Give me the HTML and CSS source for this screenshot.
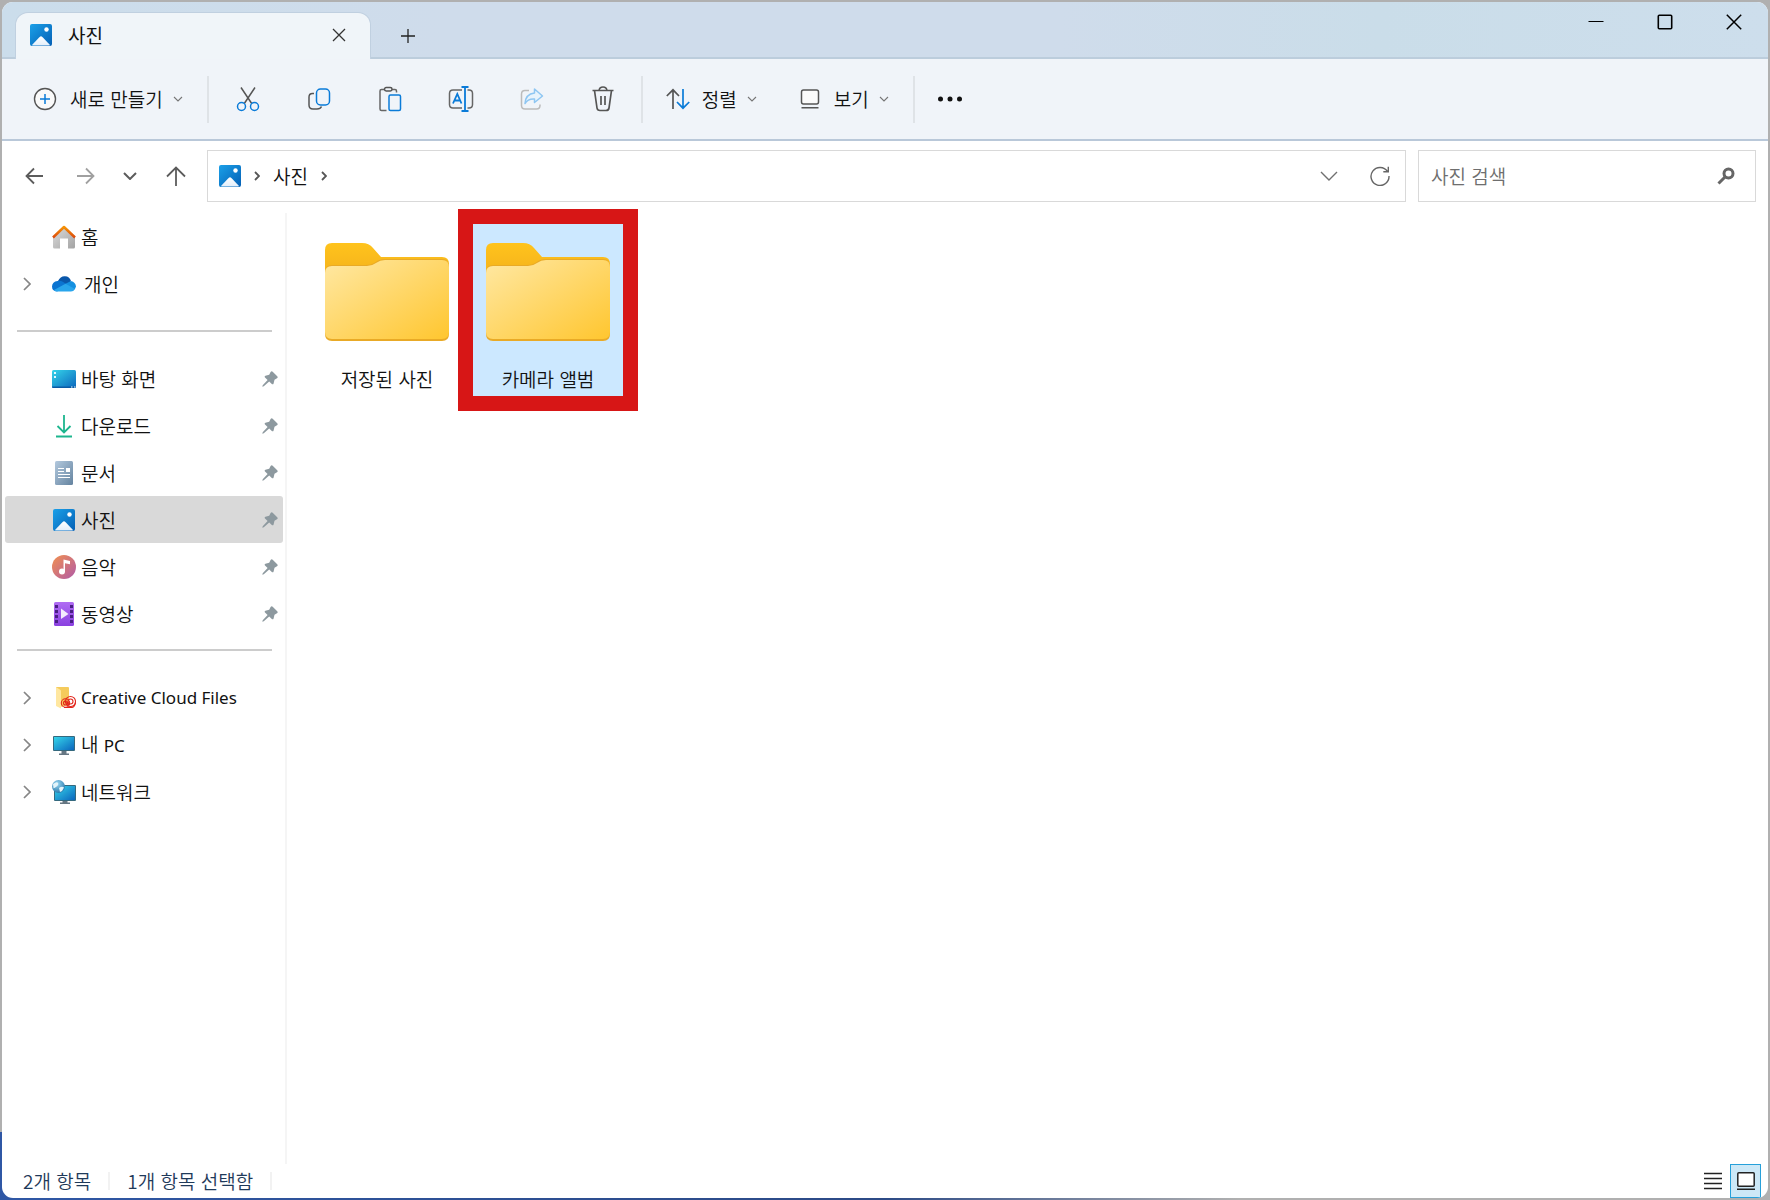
FILE: index.html
```html
<!DOCTYPE html>
<html lang="ko">
<head>
<meta charset="utf-8">
<title>사진</title>
<link rel="stylesheet" href="styles.css">
</head>
<body>
<svg class="defs" width="0" height="0" aria-hidden="true">
  <defs>
    <linearGradient id="blue" x1="0" y1="0" x2="1" y2="1"><stop offset="0" stop-color="#1ba0e8"/><stop offset="1" stop-color="#0560b5"/></linearGradient>
    <linearGradient id="snow" x1="0" y1="0" x2="0" y2="1"><stop offset="0" stop-color="#fff"/><stop offset="1" stop-color="#e3effb"/></linearGradient>
    <linearGradient id="screen" x1="0" y1="0" x2="1" y2="1"><stop offset="0" stop-color="#35d5ea"/><stop offset="1" stop-color="#0b66bd"/></linearGradient>
    <linearGradient id="roof" x1="0" y1="0" x2="0" y2="1"><stop offset="0" stop-color="#f59307"/><stop offset="1" stop-color="#dc4a0c"/></linearGradient>
    <linearGradient id="wall" x1="0" y1="0" x2="1" y2="1"><stop offset="0" stop-color="#ddd"/><stop offset="1" stop-color="#a3a3a3"/></linearGradient>
    <linearGradient id="paper" x1="0" y1="0" x2="1" y2="1"><stop offset="0" stop-color="#b3c9de"/><stop offset="1" stop-color="#64839f"/></linearGradient>
    <linearGradient id="music" x1="0" y1="0" x2="1" y2="1"><stop offset="0" stop-color="#f2904f"/><stop offset="1" stop-color="#b05aa8"/></linearGradient>
    <linearGradient id="film" x1="0" y1="0" x2="0" y2="1"><stop offset="0" stop-color="#b06cf3"/><stop offset="1" stop-color="#8a41e0"/></linearGradient>
    <linearGradient id="folder" x1="0" y1="0" x2="1" y2="1"><stop offset="0" stop-color="#ffe8a3"/><stop offset="1" stop-color="#ffc62f"/></linearGradient>
    <linearGradient id="flap" x1="0" y1="0" x2="0" y2="1"><stop offset="0" stop-color="#ffc31c"/><stop offset="1" stop-color="#eba41c"/></linearGradient>
    <radialGradient id="globe" cx=".4" cy=".3" r=".8"><stop offset="0" stop-color="#9bd8f2"/><stop offset="1" stop-color="#1c6fa5"/></radialGradient>
    <symbol id="i-picture" viewBox="0 0 22 22"><rect width="22" height="22" rx="2" fill="url(#blue)"/><path d="M2 21 9.600 13Q11 11.600 12.400 13L20 21Q19.500 21.500 19 21.500H3Q2.300 21.500 2 21Z" fill="url(#snow)"/><circle cx="16.500" cy="5.500" r="2.200" fill="#fff"/></symbol>
    <symbol id="i-folder" viewBox="0 0 124 98"><path d="M0 7Q0 0 7 0H37Q44 0 48 5L56 14H117Q124 14 124 21V60H0Z" fill="url(#flap)"/><path d="M0 30Q0 22 7 22H41Q46 22 50 19.500Q54 16 59 16H117Q124 16 124 24V91Q124 98 117 98H7Q0 98 0 91Z" fill="#e9aa26"/><path d="M0 30Q0 23 7 23H42Q47 23 51 20Q55 17 60 17H117Q124 17 124 24V89Q124 96 117 96H7Q0 96 0 89Z" fill="url(#folder)"/></symbol>
    <symbol id="i-pin" viewBox="0 0 16 16"><path d="M8.600 1Q9.600-.2 10.700.8L15.200 5.200Q16.300 6.300 15 7.200L12.500 8.700 11.600 12.500Q11 14 9.800 12.900L7.200 10.500 1.800 15.300.3 15.700.7 14.200 5.600 8.900 3 6.400Q2.100 5.300 3.400 4.700L7.200 3.700Z" fill="#8d999f"/></symbol>
    <symbol id="i-chev" viewBox="0 0 8 14"><path d="M1 1l6 6-6 6" fill="none" stroke="#868686" stroke-width="1.700"/></symbol>
    <symbol id="i-down" viewBox="0 0 10 6"><path d="M1 1l4 4 4-4" fill="none" stroke="#777" stroke-width="1.100"/></symbol>
  </defs>
</svg>

<div class="window">
  <header class="titlebar">
    <div class="tab">
      <svg width="22" height="22"><use href="#i-picture"/></svg>
      <span class="tab-title">사진</span>
      <button class="icon-btn tab-close" aria-label="탭 닫기"><svg width="14" height="14" viewBox="0 0 14 14"><path d="M1 1l12 12M13 1L1 13" stroke="#333" stroke-width="1.300"/></svg></button>
    </div>
    <button class="icon-btn new-tab" aria-label="새 탭"><svg width="16" height="16" viewBox="0 0 16 16"><path d="M8 1v14M1 8h14" stroke="#222" stroke-width="1.300"/></svg></button>
    <div class="win-buttons">
      <button class="icon-btn" aria-label="최소화"><svg width="16" height="16" viewBox="0 0 16 16"><path d="M.5 7.500h15" stroke="#000" stroke-width="1"/></svg></button>
      <button class="icon-btn" aria-label="최대화"><svg width="16" height="16" viewBox="0 0 16 16"><rect x="1.300" y="1.300" width="13.400" height="13.400" rx="1" fill="none" stroke="#000" stroke-width="1.600"/></svg></button>
      <button class="icon-btn" aria-label="닫기"><svg width="16" height="16" viewBox="0 0 16 16"><path d="M.8.8l14.400 14.400M15.200.8L.8 15.200" stroke="#000" stroke-width="1.500"/></svg></button>
    </div>
  </header>

  <div class="toolbar" role="toolbar">
    <button class="tool new-item"><svg width="24" height="24" viewBox="0 0 24 24" fill="none"><circle cx="12" cy="12" r="10.500" stroke="#555" stroke-width="1.400" fill="#fafafa"/><path d="M12 7v10M7 12h10" stroke="#0a7bd8" stroke-width="1.500"/></svg><span>새로 만들기</span><svg class="caret" width="10" height="6"><use href="#i-down"/></svg></button>
    <span class="sep"></span>
    <div class="icon-group">
      <button class="icon-btn" aria-label="잘라내기"><svg width="24" height="26" viewBox="0 0 24 26" fill="none" stroke-width="1.500"><path d="M5 1.500 15.700 17.500M19 1.500 8.300 17.500" stroke="#555"/><circle cx="5.500" cy="20.500" r="4" stroke="#0a7bd8"/><circle cx="18.500" cy="20.500" r="4" stroke="#0a7bd8"/></svg></button>
      <button class="icon-btn" aria-label="복사"><svg width="24" height="24" viewBox="0 0 24 24" fill="none" stroke-width="1.500"><path d="M7 6.500H5.500Q2 6.500 2 10V18Q2 22 6 22H10Q13.500 22 14.500 19.500" stroke="#555"/><rect x="9.500" y="2" width="13" height="16" rx="4" stroke="#0a7bd8"/></svg></button>
      <button class="icon-btn" aria-label="붙여넣기"><svg width="24" height="26" viewBox="0 0 24 26" fill="none" stroke-width="1.500"><path d="M6 3.500H3.500Q2 3.500 2 5V23Q2 24.500 3.500 24.500H8.500M14 3.500H17Q18.500 3.500 18.500 5V6.500" stroke="#666"/><rect x="6.500" y="1.500" width="7.500" height="3.500" rx="1.700" stroke="#555"/><rect x="11" y="9" width="11.500" height="15.500" rx="1.500" stroke="#0a7bd8"/></svg></button>
      <button class="icon-btn" aria-label="이름 바꾸기"><svg width="26" height="26" viewBox="0 0 26 26" fill="none" stroke-width="1.500"><path d="M14 4H5Q1.500 4 1.500 7.500V18.500Q1.500 22 5 22H14M19.500 4H21Q24.500 4 24.500 7.500V18.500Q24.500 22 21 22H19.500" stroke="#666"/><path d="M17 1v24M13.500 1H20.500M13.500 25H20.500" stroke="#0a7bd8" stroke-width="1.800"/><path d="M5 17.500 9.300 8 13.500 17.500M6.500 14.500H12" stroke="#0a7bd8" stroke-width="1.800"/></svg></button>
      <button class="icon-btn" aria-label="공유" disabled><svg width="24" height="24" viewBox="0 0 24 24" fill="none" stroke-width="1.500"><path d="M9 3.500H5Q1.500 3.500 1.500 7V18.500Q1.500 22 5 22H16.500Q20 22 20 18.500V17.500" stroke="#bbb"/><path d="M14.500 2 22.500 9 14.500 15.500V12Q8 11.500 5 16.500Q5.500 7 14.500 6Z" stroke="#8ec6f2" stroke-linejoin="round" fill="#e7f3fc"/></svg></button>
      <button class="icon-btn" aria-label="삭제"><svg width="24" height="26" viewBox="0 0 24 26" fill="none" stroke="#555" stroke-width="1.700"><path d="M1.500 4.500H22.500M8 4.500Q8.500 1 12 1T16 4.500M3.500 4.500 6 22Q6.400 24.500 9 24.500H15Q17.600 24.500 18 22L20.500 4.500"/><path d="M10 10v9M14 10v9"/></svg></button>
    </div>
    <span class="sep"></span>
    <button class="tool sort"><svg width="24" height="22" viewBox="0 0 24 22" fill="none" stroke-width="1.700"><path d="M7 21V2M.8 8 7 1.800 13 8" stroke="#555"/><path d="M17 1V20M11 14 17 20.200 23.200 14" stroke="#0a7bd8"/></svg><span>정렬</span><svg class="caret" width="10" height="6"><use href="#i-down"/></svg></button>
    <button class="tool view"><svg width="20" height="20" viewBox="0 0 20 20" fill="none" stroke="#555" stroke-width="1.500"><rect x="1.500" y="1" width="17" height="14" rx="2" fill="#fafafa"/><path d="M1.500 18.700h17"/></svg><span>보기</span><svg class="caret" width="10" height="6"><use href="#i-down"/></svg></button>
    <span class="sep"></span>
    <button class="icon-btn more" aria-label="자세히"><svg width="26" height="6" viewBox="0 0 26 6" fill="#111"><circle cx="3.500" cy="3" r="2.500"/><circle cx="13" cy="3" r="2.500"/><circle cx="22.500" cy="3" r="2.500"/></svg></button>
  </div>

  <div class="navbar">
    <div class="nav-buttons">
      <button class="icon-btn back" aria-label="뒤로"><svg width="18" height="18" viewBox="0 0 18 18" fill="none" stroke="#5c5c5c" stroke-width="1.800"><path d="M18 9H1.500M9 1.500 1.500 9 9 16.500"/></svg></button>
      <button class="icon-btn forward" aria-label="앞으로"><svg width="18" height="18" viewBox="0 0 18 18" fill="none" stroke="#a0a0a0" stroke-width="1.800"><path d="M0 9H16.500M9 1.500 16.500 9 9 16.500"/></svg></button>
      <button class="icon-btn recent" aria-label="최근 위치"><svg width="14" height="8" viewBox="0 0 14 8" fill="none" stroke="#5c5c5c" stroke-width="2"><path d="M1 1l6 6 6-6"/></svg></button>
      <button class="icon-btn up" aria-label="위로"><svg width="20" height="20" viewBox="0 0 20 20" fill="none" stroke="#5c5c5c" stroke-width="1.800"><path d="M10 20V1.500M1 10.500 10 1.500 19 10.500"/></svg></button>
    </div>
    <div class="address">
      <svg width="22" height="22"><use href="#i-picture"/></svg>
      <svg class="crumb-sep" width="6" height="10" viewBox="0 0 6 10"><path d="M1 1l4 4-4 4" fill="none" stroke="#555" stroke-width="1.800"/></svg>
      <a href="#" class="crumb">사진</a>
      <svg class="crumb-sep" width="6" height="10" viewBox="0 0 6 10"><path d="M1 1l4 4-4 4" fill="none" stroke="#555" stroke-width="1.800"/></svg>
      <div class="address-actions">
        <button class="icon-btn" aria-label="이전 위치"><svg width="18" height="10" viewBox="0 0 18 10" fill="none" stroke="#707070" stroke-width="1.400"><path d="M1 1l8 8 8-8"/></svg></button>
        <button class="icon-btn" aria-label="새로 고침"><svg width="20" height="20" viewBox="0 0 20 20" fill="none" stroke="#666" stroke-width="1.400"><path d="M17.500 5.500A9 9 0 1 0 19 10M18.300.8V5.800H13.300"/></svg></button>
      </div>
    </div>
    <label class="search">
      <input type="search" placeholder="사진 검색" aria-label="사진 검색">
      <svg width="18" height="18" viewBox="0 0 18 18" fill="none" stroke="#666"><circle cx="11.500" cy="6.500" r="4.500" stroke-width="3"/><path d="M8 10 1.500 16.500" stroke-width="3"/></svg>
    </label>
  </div>

  <div class="body">
    <nav class="sidebar">
      <a href="#" class="row"><span class="exp"></span><svg class="ico" width="24" height="24" viewBox="0 0 24 24"><path d="M1 11 12 1.500 23 11V22Q23 23.500 21.500 23.500H16V13.500H8V23.500H2.500Q1 23.500 1 22Z" fill="url(#wall)"/><path d="M1 12.500 12 2 23 12.500" fill="none" stroke="url(#roof)" stroke-width="2.500" stroke-linejoin="round"/></svg><span>홈</span></a>
      <a href="#" class="row personal"><span class="exp"><svg width="8" height="14"><use href="#i-chev"/></svg></span><svg class="ico" width="24" height="16" viewBox="0 0 24 16"><path d="M6 5Q8.500 0 13 .3Q17.500.5 19 5L14 10Z" fill="#0a57aa"/><path d="M5 15.500Q0 15 0 10.500Q.3 5.500 5.500 5Q9 4 12 6.500L17 10 5 15.500Z" fill="#0b74d1"/><path d="M13 8 19 5Q23.500 6 24 10.500Q23.500 13.500 21 14Z" fill="#1590e0"/><path d="M2 14 13.500 7.700 23 13Q21.500 15.500 19 15.500H5.500Q3 15.500 2 14Z" fill="#29a5ec"/></svg><span>개인</span></a>
      <hr class="rule rule-top">
      <a href="#" class="row"><span class="exp"></span><svg class="ico" width="24" height="18" viewBox="0 0 24 18"><rect width="24" height="18" rx="1.500" fill="url(#screen)"/><path d="M0 16.500H24Q24 18 23 18H1Q0 18 0 16.500Z" fill="#0a5ba5"/><path d="M2 2h2v2H2zM2 6h2v2H2zM19 16.500h1.500v1H19zM22 16.500h1.500v1H22z" fill="#e2faff"/></svg><span>바탕 화면</span><svg class="pin" width="16" height="16"><use href="#i-pin"/></svg></a>
      <a href="#" class="row"><span class="exp"></span><svg class="ico" width="24" height="24" viewBox="0 0 24 24" fill="none" stroke="#1db68e" stroke-width="1.800"><path d="M12 1V18M5.500 12 12 18.500 18.500 12M4 22.500H20"/></svg><span>다운로드</span><svg class="pin" width="16" height="16"><use href="#i-pin"/></svg></a>
      <a href="#" class="row"><span class="exp"></span><svg class="ico" width="24" height="24" viewBox="0 0 24 24"><rect x="3" width="18" height="24" rx="1.500" fill="url(#paper)"/><path d="M6 7.500h6M6 10.500h6M6 13.500h12M6 16.500h12" stroke="#fff" stroke-width="1.200"/><path d="M14 7h4v4h-4z" fill="#fff"/></svg><span>문서</span><svg class="pin" width="16" height="16"><use href="#i-pin"/></svg></a>
      <a href="#" class="row current" aria-current="page"><span class="exp"></span><svg class="ico" width="24" height="22"><use href="#i-picture"/></svg><span>사진</span><svg class="pin" width="16" height="16"><use href="#i-pin"/></svg></a>
      <a href="#" class="row"><span class="exp"></span><svg class="ico" width="24" height="24" viewBox="0 0 24 24"><circle cx="12" cy="12" r="12" fill="url(#music)"/><circle cx="10" cy="16.500" r="3" fill="#fff"/><path d="M11.500 17V4.500L18 6V9.300L13 8.300V17Z" fill="#fff"/></svg><span>음악</span><svg class="pin" width="16" height="16"><use href="#i-pin"/></svg></a>
      <a href="#" class="row"><span class="exp"></span><svg class="ico" width="24" height="24" viewBox="0 0 24 24"><rect x="2" width="20" height="24" rx="1.500" fill="url(#film)"/><path d="M3 3h3v3H3zM3 8h3v3H3zM3 13h3v3H3zM3 18h3v3H3zM18 3h3v3h-3zM18 8h3v3h-3zM18 13h3v3h-3zM18 18h3v3h-3z" fill="#4a1f85"/><path d="M9 6.500 16.500 12 9 17Z" fill="#f4ecfd"/></svg><span>동영상</span><svg class="pin" width="16" height="16"><use href="#i-pin"/></svg></a>
      <hr class="rule rule-bottom">
      <a href="#" class="row"><span class="exp"><svg width="8" height="14"><use href="#i-chev"/></svg></span><svg class="ico" width="24" height="22" viewBox="0 0 24 22"><path d="M4 0H16Q17 0 17 1V18L8 20 4 18Z" fill="#f5cb5c"/><path d="M4 0 8.500 3Q9 3.500 9 4V21.500L4 19Z" fill="#ffe7a0"/><g fill="none" stroke="#e2261c" stroke-width="1.100"><circle cx="18.500" cy="14.500" r="5"/><circle cx="18.500" cy="14.500" r="2.500"/><circle cx="13.500" cy="16" r="4.200"/><circle cx="13.500" cy="16" r="2"/><path d="M12 20.500H20Q23 19.500 23.500 15.500M12 14 17 18"/></g></svg><span class="latin">Creative Cloud Files</span></a>
      <a href="#" class="row"><span class="exp"><svg width="8" height="14"><use href="#i-chev"/></svg></span><svg class="ico" width="24" height="20" viewBox="0 0 24 20"><rect x="1" y="1" width="22" height="15" rx="1" fill="#35697e"/><rect x="2" y="2" width="20" height="13" fill="url(#screen)"/><path d="M9.500 16h5v2.500H17V20H7V18.500H9.500Z" fill="#667783"/></svg><span>내 <span class="latin">PC</span></span></a>
      <a href="#" class="row"><span class="exp"><svg width="8" height="14"><use href="#i-chev"/></svg></span><svg class="ico" width="24" height="24" viewBox="0 0 24 24"><rect x="2" y="5" width="22" height="16" rx="1" fill="#35697e"/><rect x="3" y="6" width="20" height="14" fill="url(#screen)"/><path d="M10.500 21h5v1.500H18V24H8V22.500H10.500Z" fill="#667783"/><circle cx="6.500" cy="6.500" r="6.500" fill="url(#globe)"/><path d="M1 4Q5 1 6 3T4 7 1.500 8ZM7 8Q10 6 12 7.500L10 11 8 12Z" fill="#e3f4fa"/></svg><span>네트워크</span></a>
    </nav>

    <main class="files">
      <button class="tile"><svg width="124" height="98"><use href="#i-folder"/></svg><span>저장된 사진</span></button>
      <button class="tile selected" aria-pressed="true"><svg width="124" height="98"><use href="#i-folder"/></svg><span>카메라 앨범</span></button>
    </main>
  </div>

  <footer class="status">
    <span class="status-item">2개 항목</span>
    <span class="status-item">1개 항목 선택함</span>
    <div class="layouts">
      <button class="layout" aria-label="자세히 보기"><svg width="18" height="18" viewBox="0 0 18 18" stroke="#222" stroke-width="1.300"><path d="M0 1.500h18M0 6.500h18M0 11.500h18M0 16.500h18"/></svg></button>
      <button class="layout active" aria-label="큰 아이콘" aria-pressed="true"><svg width="18" height="18" viewBox="0 0 18 18" fill="#fff" stroke="#222" stroke-width="1.500"><rect x=".8" y=".8" width="16.400" height="13.400" rx="1"/><path d="M0 17.200h18"/></svg></button>
    </div>
  </footer>
</div>
</body>
</html>
```

FILE: styles.css
```css
* { box-sizing: border-box; }

body {
  margin: 0;
  padding: 2px;
  min-height: 100vh;
  display: flex;
  font: 350 19px/24px "Noto Sans CJK KR", sans-serif;
  color: #111;
  background:
    linear-gradient(to right, #2f57a5, #2c4a86 50%, transparent 70%) bottom / 100% 68px no-repeat,
    #b0b0b0;
}

.defs { position: absolute; }
svg { display: block; flex: none; }
a { color: inherit; text-decoration: none; }

button {
  margin: 0;
  padding: 0;
  border: 0;
  background: none;
  font: inherit;
  color: inherit;
}

.icon-btn {
  display: flex;
  align-items: center;
  justify-content: center;
}

.window {
  flex: 1;
  display: flex;
  flex-direction: column;
  overflow: hidden;
  border-radius: 11px;
  background: #fff;
}

/* Title bar */
.titlebar {
  display: flex;
  align-items: flex-end;
  height: 57px;
  padding-left: 14px;
  background: linear-gradient(to right, #cbddeb, #cfdceb 25%, #cfdceb 60%, #cadde9 78%, #cddeec);
  box-shadow: inset 0 -2px #bccddc;
}

.tab {
  display: flex;
  align-items: center;
  width: 354px;
  height: 46px;
  padding: 0 24px 2px 14px;
  border-radius: 12px 12px 0 0;
  background: #f0f5f9;
  box-shadow: 0 0 0 1px #c0d0e0;
}

.tab-title { margin-left: 16px; font-weight: 400; }
.tab-close { margin-left: auto; }
.new-tab { width: 76px; height: 46px; }

.win-buttons {
  align-self: flex-start;
  display: flex;
  margin-left: auto;
}
.win-buttons .icon-btn { width: 69px; height: 40px; }

/* Command bar */
.toolbar {
  display: flex;
  align-items: center;
  height: 82px;
  padding-left: 31px;
  background: #f0f4f9;
  border-bottom: 2px solid #b9c8d9;
}

.tool { display: flex; align-items: center; height: 48px; }
.tool .caret { margin-left: 10px; }
.new-item span { margin-left: 13px; }
.new-item { padding-right: 24px; }
.sort { padding: 0 43px 0 23px; }
.sort span { margin-left: 12px; }
.view { padding-right: 24px; }
.view span { margin-left: 14px; }
.icon-group { display: flex; padding: 0 2px 0 4px; }
.icon-group .icon-btn { width: 71px; height: 48px; }
.more { width: 70px; height: 48px; }
.sep { width: 2px; height: 47px; background: #dfe3e7; }

/* Navigation and address bar */
.navbar {
  display: flex;
  height: 72px;
  padding: 9px 12px 11px 8px;
}

.nav-buttons { display: flex; width: 197px; }
.back { width: 48px; }
.forward { width: 56px; }
.recent { width: 32px; }
.up { width: 60px; }

.address, .search {
  display: flex;
  align-items: center;
  border: 1px solid #d9d9d9;
}
.address { flex: 1; padding-left: 11px; }
.crumb-sep { margin-left: 13px; }
.crumb { margin-left: 13px; }
.address-actions { display: flex; margin-left: auto; }
.address-actions .icon-btn { width: 51px; height: 50px; }

.search { width: 338px; margin-left: 12px; padding: 0 20px 0 12px; }
.search input {
  flex: 1;
  min-width: 0;
  padding: 0;
  border: 0;
  outline: 0;
  background: none;
  font: inherit;
}
.search input::placeholder { color: #6e6e6e; opacity: 1; }

/* Sidebar */
.body { flex: 1; display: flex; }

.sidebar {
  width: 285px;
  padding: 0 2px 0 3px;
  border-right: 2px solid #f5f5f5;
}

.row {
  display: flex;
  align-items: center;
  height: 47px;
  border-radius: 3px;
  padding-right: 5px;
}
.row.current { background: #d9d9d9; }
.exp { display: flex; width: 47px; padding-left: 18px; }
.ico { margin-right: 5px; }
.personal .ico { margin-right: 8px; }
.pin { margin-left: auto; }
.latin { font: 400 17px "Noto Sans", sans-serif; }

.rule {
  height: 2px;
  margin: 23px 11px 23px 12px;
  border: 0;
  background: #ccc;
}
.rule-bottom { margin-top: 12px; }

/* Files */
.files {
  flex: 1;
  display: flex;
  align-items: flex-start;
  gap: 11px;
  padding: 11px 25px;
}

.tile {
  display: flex;
  flex-direction: column;
  align-items: center;
  gap: 26px;
  width: 150px;
  height: 172px;
  padding-top: 19px;
}
.selected {
  background: #cce8ff;
  outline: 15px solid #d71616;
}

/* Status bar */
.status {
  display: flex;
  align-items: center;
  height: 34px;
  padding: 0 7px 0 4px;
  color: #1f3a5a;
}
.status-item {
  padding: 0 17px;
  line-height: 18px;
  border-right: 2px solid #f2f2f2;
}
.layouts { display: flex; gap: 5px; margin-left: auto; }
.layout {
  display: flex;
  align-items: center;
  justify-content: center;
  width: 24px;
  height: 34px;
}
.layout.active {
  width: 31px;
  border: 1px solid #26a0da;
  background: #cce8f7;
}
```
